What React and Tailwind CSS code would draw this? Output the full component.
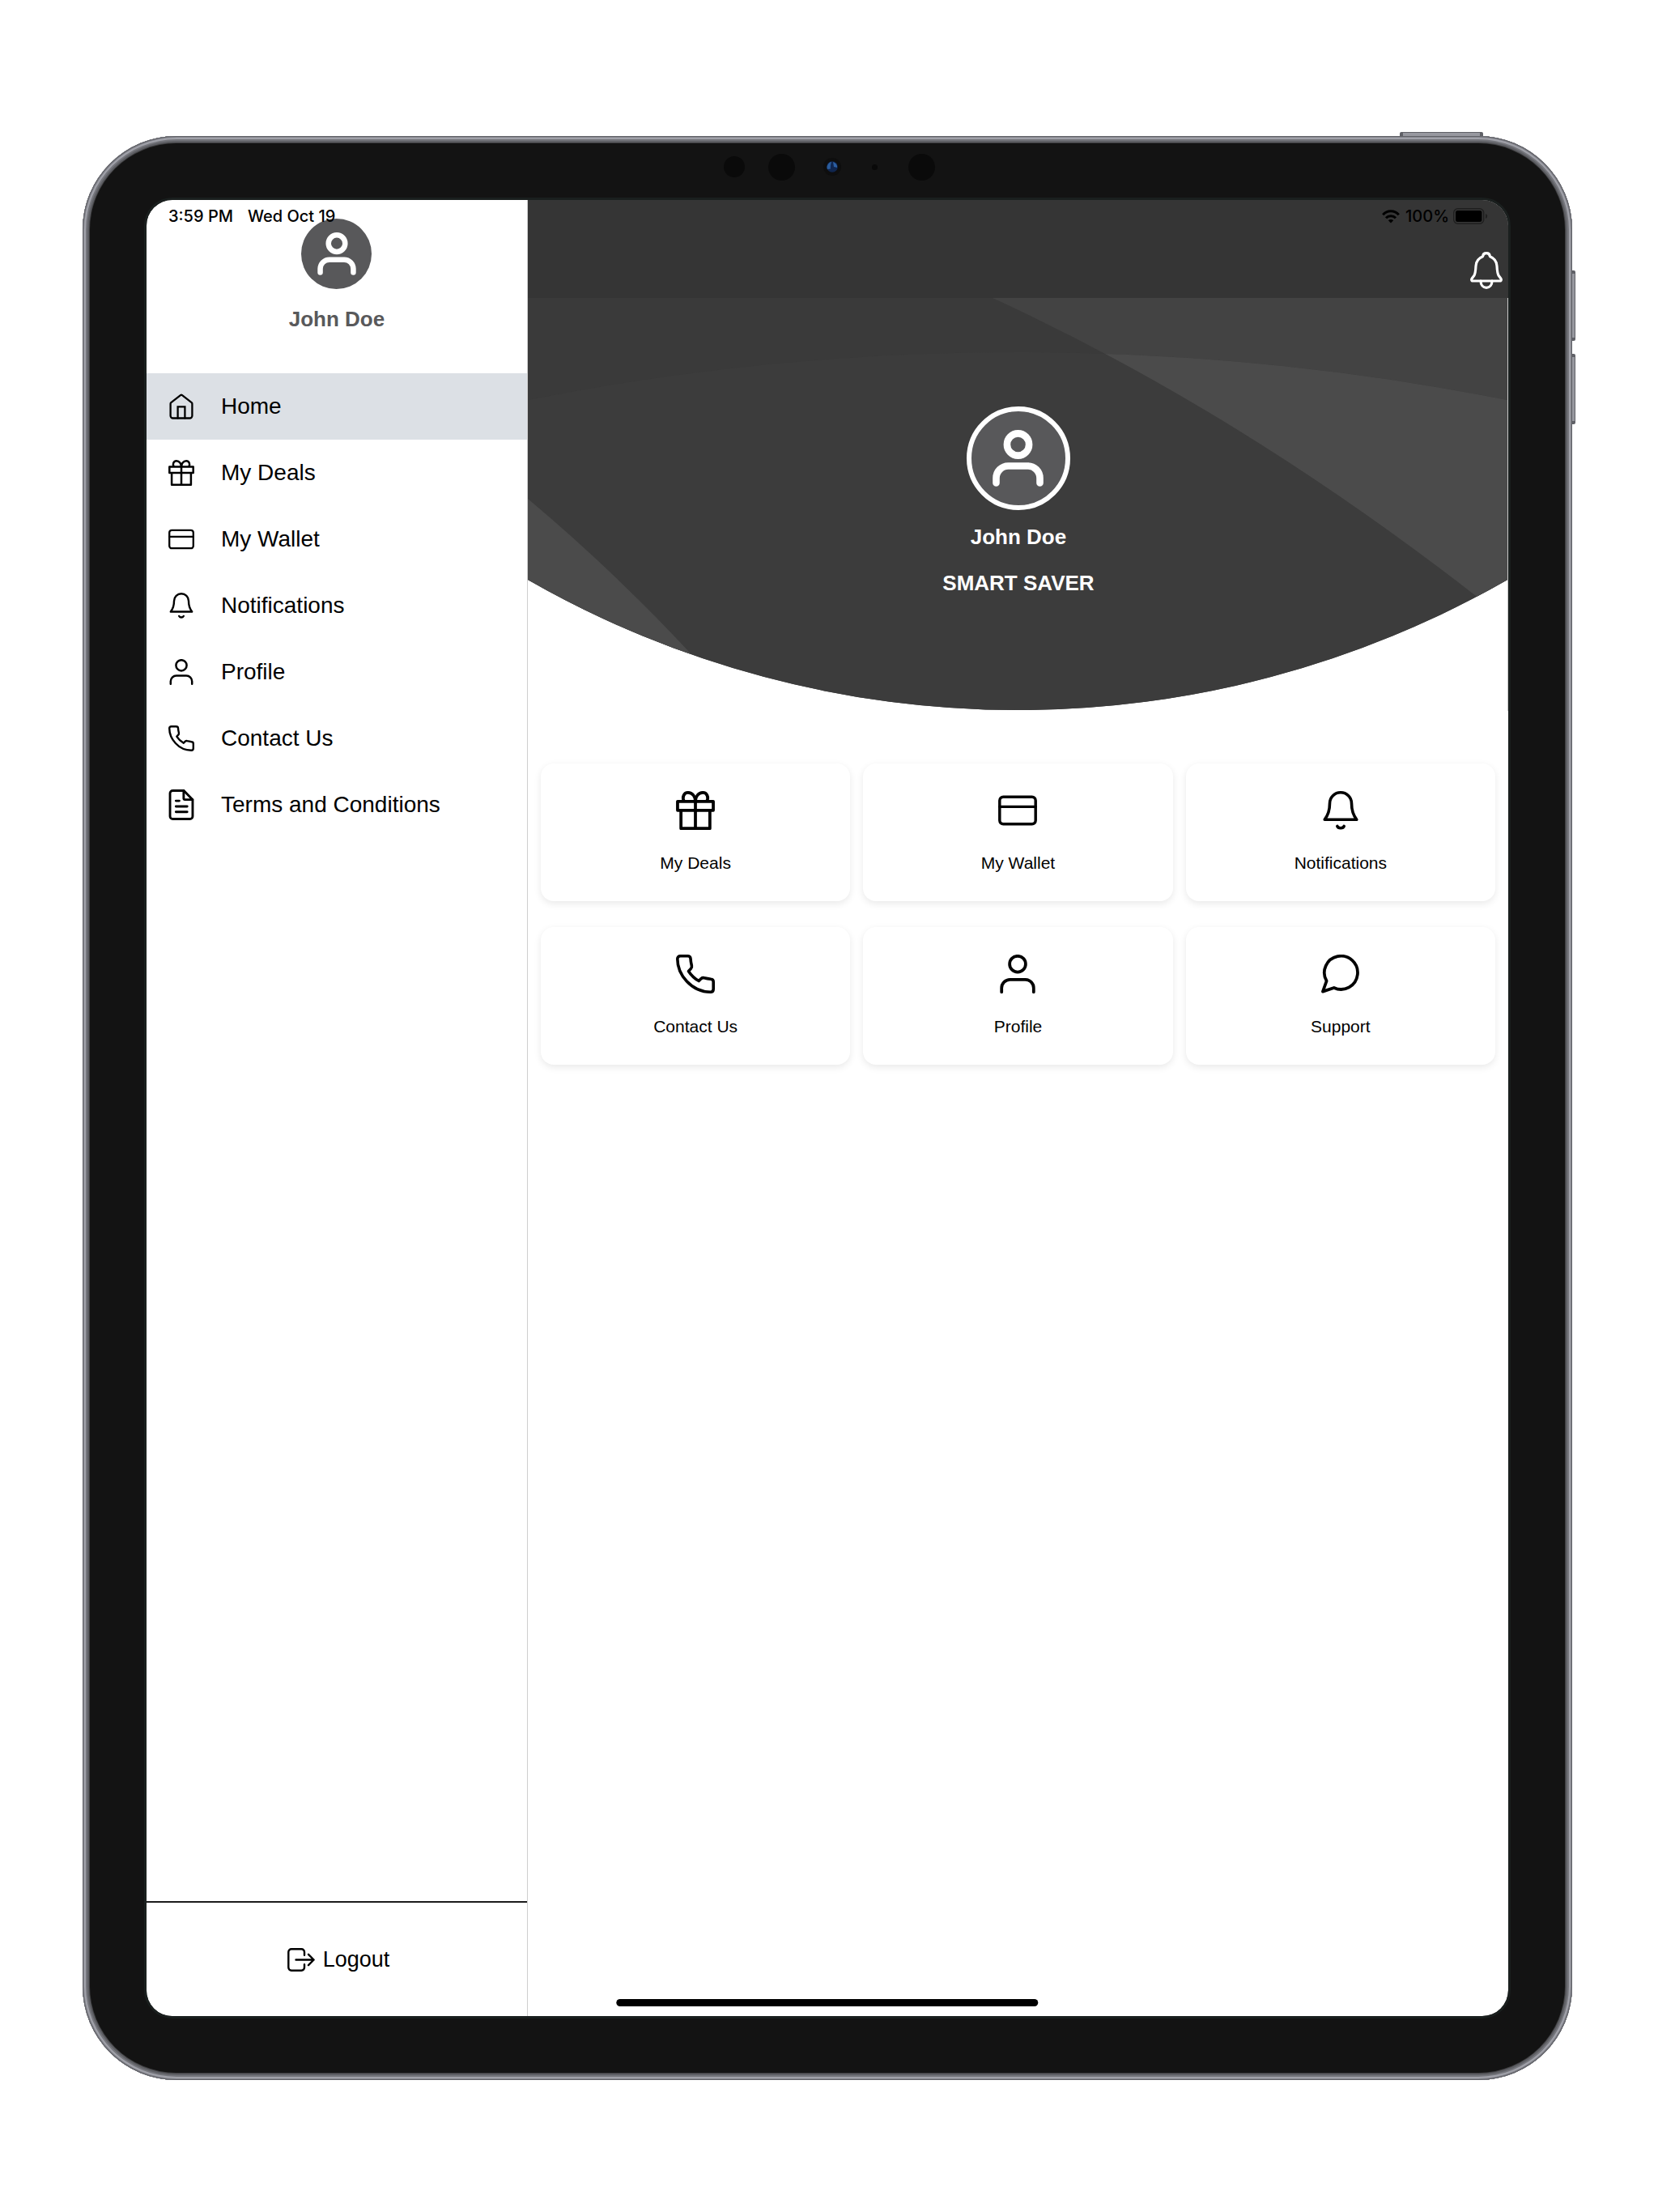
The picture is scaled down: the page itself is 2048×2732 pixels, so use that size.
const iconProps = {
  viewBox: "0 0 32 32",
  fill: "none",
  stroke: "currentColor",
  strokeLinecap: "round",
  strokeLinejoin: "round",
  "aria-hidden": true,
};

function HomeIcon({ className }) {
  return (
    <svg {...iconProps} strokeWidth="2.3" className={className}>
      <path d="M3.4 11.2 15.3 1.9a1.2 1.2 0 0 1 1.4 0l11.9 9.3c.6.5.8.9.8 1.6v14.7a3 3 0 0 1-3 3H5.6a3 3 0 0 1-3-3V12.8c0-.7.2-1.1.8-1.6z" />
      <path d="M11.6 30.4V16.4h8.8v14" strokeLinejoin="miter" />
    </svg>
  );
}

function GiftIcon({ className }) {
  return (
    <svg {...iconProps} strokeWidth="2.5" strokeLinecap="butt" className={className}>
      <path d="M1.3 8.5h29.400v7.400H1.300zM4.100 15.900h23.800V30.800H4.100zM16 6v25" />
      <path d="M6.600 8.500C4.800 4.900 6.600 1.300 9.900 1.300c3.700 0 6.100 3.300 6.100 7.200 0-3.900 2.400-7.200 6.100-7.200 3.300 0 5.100 3.600 3.300 7.200" />
    </svg>
  );
}

function CardIcon({ className }) {
  return (
    <svg {...iconProps} strokeWidth="2.300" className={className}>
      <rect x="1.200" y="4.800" width="29.600" height="22.400" rx="3" />
      <path d="M1.200 12.900h29.600" />
    </svg>
  );
}

function BellIcon({ className }) {
  return (
    <svg {...iconProps} strokeWidth="2.400" className={className}>
      <path d="M16 1.200a9 9 0 0 1 9 9c0 6.800 1.800 10.300 4.200 13.300H2.800C5.200 20.500 7 17 7 10.200a9 9 0 0 1 9-9z" />
      <path d="M13.200 28.900a2.900 2.100 0 0 0 5.600 0" />
    </svg>
  );
}

function UserIcon({ className }) {
  return (
    <svg {...iconProps} strokeWidth="2.500" className={className}>
      <circle cx="16" cy="7.800" r="6.600" />
      <path d="M2.800 30.800v-3.300a7 7 0 0 1 7-7h12.400a7 7 0 0 1 7 7v3.300" />
    </svg>
  );
}

function PhoneIcon({ className }) {
  return (
    <svg {...iconProps} strokeWidth="2.400" className={className}>
      <path d="M3.600 1.200H9.500C10.900 1.200 11.900 1.900 12 3.300 12.100 5.600 12.400 7 12.900 9c.300 1.200 0 2-.7 2.700L10.300 13.600C12.500 17 15 19.500 18.800 21.700l2-2c.7-.6 1.500-.8 2.400-.5 1.800.5 3.500.8 5.500 1 1.300.1 2.100 1 2.100 2.300v5.800C30.800 29.900 29.900 30.800 28.400 30.800 12.600 30.800 1.200 16.500 1.200 3.500 1.200 2.100 2.100 1.200 3.600 1.200z" />
    </svg>
  );
}

function ChatIcon({ className }) {
  return (
    <svg {...iconProps} strokeWidth="2.500" className={className}>
      <path d="M4.400 21.700A13.700 13.700 0 1 1 10.500 27.300L1.300 30.400z" />
    </svg>
  );
}

function DocumentIcon({ className }) {
  return (
    <svg {...iconProps} viewBox="0 0 30 37" strokeWidth="2.800" className={className}>
      <path d="M4.500 1.400H18L28.600 12.300V32.300a3.200 3.200 0 0 1-3.200 3.200H4.600a3.200 3.200 0 0 1-3.200-3.200V4.600a3.200 3.200 0 0 1 3.200-3.200z" />
      <path d="M17.800 1.500V11a1.300 1.300 0 0 0 1.300 1.300h9.400M8.500 13.700h4M8.500 20.400h13.500M8.500 27h13.500" />
    </svg>
  );
}

function LogoutIcon({ className }) {
  return (
    <svg {...iconProps} viewBox="0 0 34 29" strokeWidth="2.400" className={className}>
      <path d="M21 8.800V4.900a3.600 3.600 0 0 0-3.600-3.600H4.900a3.600 3.600 0 0 0-3.600 3.600v19.200a3.600 3.600 0 0 0 3.600 3.600h12.500a3.600 3.600 0 0 0 3.600-3.600v-3.900" />
      <path d="M10.500 14.500h22M26 7.800l6.600 6.700L26 21.200" />
    </svg>
  );
}

function HeaderBellIcon({ className }) {
  return (
    <svg {...iconProps} viewBox="0 0 40 46" strokeWidth="3.200" className={className}>
      <path d="M20 1.700c-2.500 0-4.200 1.600-4.400 4C10.600 7.700 7.300 11 7 17.500c-.3 6.500-.7 10-2.400 12.300-1.200 1.500-2.300 2.700-2.800 4C1.400 35.200 2.100 36 3.500 36h33c1.400 0 2.100-.8 1.700-2.200-.5-1.300-1.600-2.500-2.800-4C33.700 27.500 33.300 24 33 17.500c-.3-6.500-3.600-9.800-8.600-11.800-.2-2.400-1.900-4-4.400-4z" />
      <path d="M13 36c0 5 3 8.300 7 8.300s7-3.300 7-8.300" />
    </svg>
  );
}

function AvatarIcon({ className }) {
  return (
    <svg {...iconProps} viewBox="0 0 63 70" strokeWidth="8.600" className={className}>
      <circle cx="31.500" cy="18" r="13.600" />
      <path d="M4.500 65.500v-6a15 15 0 0 1 15-15h24a15 15 0 0 1 15 15v6" />
    </svg>
  );
}

function WifiIcon({ className }) {
  return (
    <svg viewBox="0 0 22 17" fill="none" stroke="currentColor" strokeWidth="3" aria-hidden="true" className={className}>
      <path d="M1.200 6.200C6.500.400 15.500.400 20.800 6.200" />
      <path d="M5 10.200c3.200-3.400 8.800-3.400 12 0" />
      <path d="M11 16.500 7.800 13.200c1.800-1.700 4.600-1.700 6.400 0z" fill="currentColor" stroke="none" />
    </svg>
  );
}

function BatteryIcon({ className }) {
  return (
    <svg viewBox="0 0 43 20" aria-hidden="true" className={className}>
      <rect x="0.700" y="0.700" width="37" height="18.600" rx="5" fill="none" stroke="#1f1f1f" strokeWidth="1.400" />
      <rect x="3" y="3" width="32.400" height="14" rx="2.500" fill="#000" />
      <path d="M40 7v6c1.300-.5 2.200-1.600 2.200-3S41.300 7.500 40 7z" fill="#1f1f1f" />
    </svg>
  );
}

const navItems = [
  { label: "Home", Icon: HomeIcon, active: true },
  { label: "My Deals", Icon: GiftIcon },
  { label: "My Wallet", Icon: CardIcon },
  { label: "Notifications", Icon: BellIcon },
  { label: "Profile", Icon: UserIcon },
  { label: "Contact Us", Icon: PhoneIcon },
  { label: "Terms and Conditions", Icon: DocumentIcon, tall: true },
];

const tiles = [
  { label: "My Deals", Icon: GiftIcon },
  { label: "My Wallet", Icon: CardIcon },
  { label: "Notifications", Icon: BellIcon },
  { label: "Contact Us", Icon: PhoneIcon },
  { label: "Profile", Icon: UserIcon },
  { label: "Support", Icon: ChatIcon },
];

function CameraStrip() {
  return (
    <div className="absolute inset-x-0 top-0 flex h-[76px] items-center justify-center pl-1" aria-hidden="true">
      <div className="mr-[29px] size-[26px] rounded-full bg-[#0a0a0a]" />
      <div className="mr-[35px] size-[33px] rounded-full bg-[#0a0a0a]" />
      <div className="mr-[38px] flex size-[22px] items-center justify-center rounded-full bg-[#0e0e0e]">
        <svg viewBox="0 0 14 14" className="size-[14px]">
          <circle cx="7" cy="7" r="6.800" fill="#10264f" />
          <path d="M2 3.500A6.500 6.500 0 0 1 6 .7C5 4 4.500 7 5 9.500L1 10A6.500 6.500 0 0 1 2 3.500z" fill="#2a5c9c" />
          <path d="M8 1a6.500 6.500 0 0 1 5 7l-4-1z" fill="#2b5fa3" />
        </svg>
      </div>
      <div className="mr-[38px] size-[7px] rounded-full bg-[#090909]" />
      <div className="size-[33px] rounded-full bg-[#0a0a0a]" />
    </div>
  );
}

function StatusBar() {
  return (
    <div className="pointer-events-none absolute inset-x-0 top-0 flex h-10 items-center justify-between pl-[27px] pr-[25px] font-['Inter',sans-serif] text-[20px] font-medium leading-6 text-black">
      <div className="flex gap-[18px]">
        <span>3:59 PM</span>
        <span>Wed Oct 19</span>
      </div>
      <div className="flex items-center">
        <WifiIcon className="mr-[7px] h-[17px] w-[22px]" />
        <span className="mr-[5px]">100%</span>
        <BatteryIcon className="h-5 w-[43px]" />
      </div>
    </div>
  );
}

function Sidebar() {
  return (
    <aside className="flex w-[28%] shrink-0 flex-col border-r border-[#cfcfcf] bg-white">
      <div className="flex flex-col items-center pb-[51px] pt-[23px]">
        <div className="flex size-[87px] items-center justify-center rounded-full bg-[#58585a] text-white">
          <AvatarIcon className="h-[53px] w-[48px]" />
        </div>
        <p className="mt-[21px] text-[26px] font-bold leading-8 text-[#59595b]">John Doe</p>
      </div>
      <nav className="flex flex-col">
        {navItems.map(({ label, Icon, active, tall }) => (
          <a
            key={label}
            href="#"
            aria-current={active ? "page" : undefined}
            className={
              active
                ? "flex h-[82px] items-center gap-[33px] bg-[#dce0e5] pl-[27px] text-[28px] leading-8"
                : "flex h-[82px] items-center gap-[33px] pl-[27px] text-[28px] leading-8"
            }
          >
            <Icon className={tall ? "h-[38px] w-8" : "size-8"} />
            {label}
          </a>
        ))}
      </nav>
      <div className="mt-auto flex h-[142px] items-center justify-center border-t-2 border-[#1c1c1c]">
        <button type="button" className="flex items-center gap-[10px] pl-1 text-[27px] leading-8">
          <LogoutIcon className="h-[29px] w-[34px]" />
          Logout
        </button>
      </div>
    </aside>
  );
}

function HeroBackdrop() {
  return (
    <svg
      viewBox="0 0 1210 510"
      preserveAspectRatio="none"
      aria-hidden="true"
      className="absolute inset-0 size-full"
    >
      <defs>
        <clipPath id="hero-shape">
          <path d="M0 0H1210V348A1217 1217 0 0 1 0 348z" />
        </clipPath>
        <clipPath id="hero-dome">
          <path d="M0 126A3131 3131 0 0 1 1210 126V510H0z" />
        </clipPath>
      </defs>
      <g clipPath="url(#hero-shape)">
        <path d="M0 0H1210V510H0z" fill="#3a3a3a" />
        <path d="M574 0Q878 140 1171 368L1210 400V0z" fill="#434343" />
        <g clipPath="url(#hero-dome)">
          <path d="M0 0H1210V510H0z" fill="#3c3c3c" />
          <path d="M574 0Q878 140 1171 368L1210 400V0z" fill="#4b4b4b" />
          <path d="M0 248Q105 336 200 438V510H0z" fill="#4b4b4b" />
        </g>
      </g>
    </svg>
  );
}

function Hero() {
  return (
    <section className="relative flex h-[510px] flex-col items-center border-r border-[#c8c8c8] pl-[2px] pt-[134px] text-[26px] font-bold leading-8 text-white">
      <HeroBackdrop />
      <div className="relative flex size-32 items-center justify-center rounded-full border-6 border-white bg-[#58585a]">
        <AvatarIcon className="h-[70px] w-[63px]" />
      </div>
      <p className="relative mt-[17px]">John Doe</p>
      <p className="relative mt-[25px]">SMART SAVER</p>
    </section>
  );
}

export default function App() {
  return (
    <div className="flex min-h-screen bg-white pb-[163px] pl-[102px] pr-[106px] pt-[168px] font-['Liberation_Sans',Arial,sans-serif] text-black">
      <div className="relative flex flex-1">
        <div className="absolute -top-[5px] right-[110px] h-2 w-[103px] rounded-t-xs border-x-4 border-t border-[#606167] bg-[#97989f]" />
        <div className="absolute -right-1 top-[166px] h-[87px] w-2 rounded-r-xs border-y-4 border-r border-[#606167] bg-[#97989f]" />
        <div className="absolute -right-1 top-[269px] h-[87px] w-2 rounded-r-xs border-y-4 border-r border-[#606167] bg-[#97989f]" />
        <div className="relative flex flex-1 rounded-[116px] bg-[#131313] p-[79px] shadow-[inset_0_0_0_1px_#606167,inset_0_0_0_2px_#85868d,inset_0_0_0_4px_#a0a1a9,inset_0_0_0_6px_#74757b,inset_0_0_0_8px_#5e5f64,inset_0_0_0_9px_#3d3d3f]">
          <CameraStrip />
          <div className="relative flex flex-1 overflow-hidden rounded-[32px] bg-white outline-3 outline-[#1a1f1e]">
            <Sidebar />
            <main className="flex min-w-0 flex-1 flex-col">
              <header className="flex h-[121px] items-end justify-end bg-[#353535] pb-[11px] pr-[7px] text-white">
                <button type="button" aria-label="Notifications">
                  <HeaderBellIcon className="h-[46px] w-10" />
                </button>
              </header>
              <Hero />
              <div className="grid grid-cols-3 gap-x-4 gap-y-8 px-4 pt-[65px]">
                {tiles.map(({ label, Icon }) => (
                  <a
                    key={label}
                    href="#"
                    className="flex flex-col items-center rounded-2xl bg-white pb-[33px] pt-[34px] text-[21px] leading-7 shadow-[0_3px_10px_rgba(0,0,0,0.09)]"
                  >
                    <Icon className="mb-[27px] size-12" />
                    {label}
                  </a>
                ))}
              </div>
            </main>
            <StatusBar />
            <div className="absolute bottom-3 left-1/2 h-[9px] w-[31%] -translate-x-1/2 rounded-full bg-black" />
          </div>
        </div>
      </div>
    </div>
  );
}
